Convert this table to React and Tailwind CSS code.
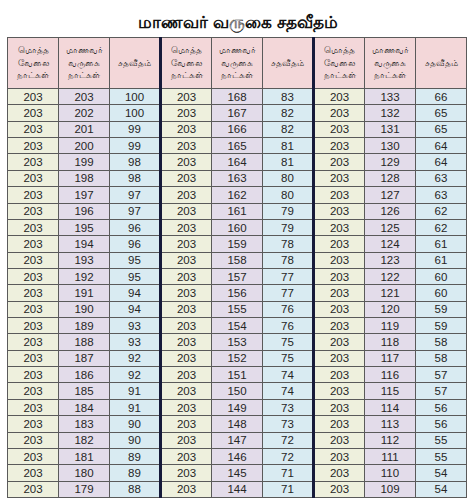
import React from 'react';

const TOTAL = 203;
const starts = [203, 168, 133];
const ROWS = 25;

const pct = (n) => Math.round((n / TOTAL) * 100);

const HeaderCell = ({ lines, divider }) => (
    <th
        className={`bg-[#f3d7d9] border border-[#5a5a5a] font-normal text-[9px] leading-[12.5px] text-[#333] align-middle ${divider ? 'border-l-[3px] border-l-[#161a3a]' : ''}`}
    >
        {lines.map((l) => (
            <div key={l}>{l}</div>
        ))}
    </th>
);

const cellBg = ['bg-[#eef0dd]', 'bg-[#e3dcea]', 'bg-[#d9ebf2]'];

export default function App() {
    const rows = Array.from({ length: ROWS }, (_, i) => starts.map((s) => [TOTAL, s - i, pct(s - i)]));

    return (
        <div className="w-[474px] h-[500px] bg-white pt-[12px]" style={{ fontFamily: '"Liberation Sans", "Noto Sans", sans-serif' }}>
            <h1 className="text-center text-[17px] font-bold leading-[22px] text-[#111] mb-[3px] ml-[2px]">
                மாணவர் வருகை சதவீதம்
            </h1>
            <table className="ml-[7px] w-[459px] table-fixed border-collapse text-center">
                <colgroup>
                    {Array.from({ length: 9 }, (_, i) => (
                        <col key={i} className="w-[51px]" />
                    ))}
                </colgroup>
                <thead>
                    <tr className="h-[51px]">
                        {[0, 1, 2].map((g) => (
                            <React.Fragment key={g}>
                                <HeaderCell lines={['மொத்த', 'வேலை', 'நாட்கள்']} divider={g > 0} />
                                <HeaderCell lines={['மாணவர்', 'வருகை', 'நாட்கள்']} />
                                <HeaderCell lines={['சதவீதம்']} />
                            </React.Fragment>
                        ))}
                    </tr>
                </thead>
                <tbody>
                    {rows.map((row, i) => (
                        <tr key={i} className="h-[16.36px]">
                            {row.map((group, g) =>
                                group.map((v, c) => (
                                    <td
                                        key={`${g}-${c}`}
                                        className={`${cellBg[c]} border border-[#5a5a5a] p-0 text-[11.5px] leading-[14px] text-[#262626] ${c === 0 && g > 0 ? 'border-l-[3px] border-l-[#161a3a]' : ''}`}
                                    >
                                        {v}
                                    </td>
                                ))
                            )}
                        </tr>
                    ))}
                </tbody>
            </table>
        </div>
    );
}
